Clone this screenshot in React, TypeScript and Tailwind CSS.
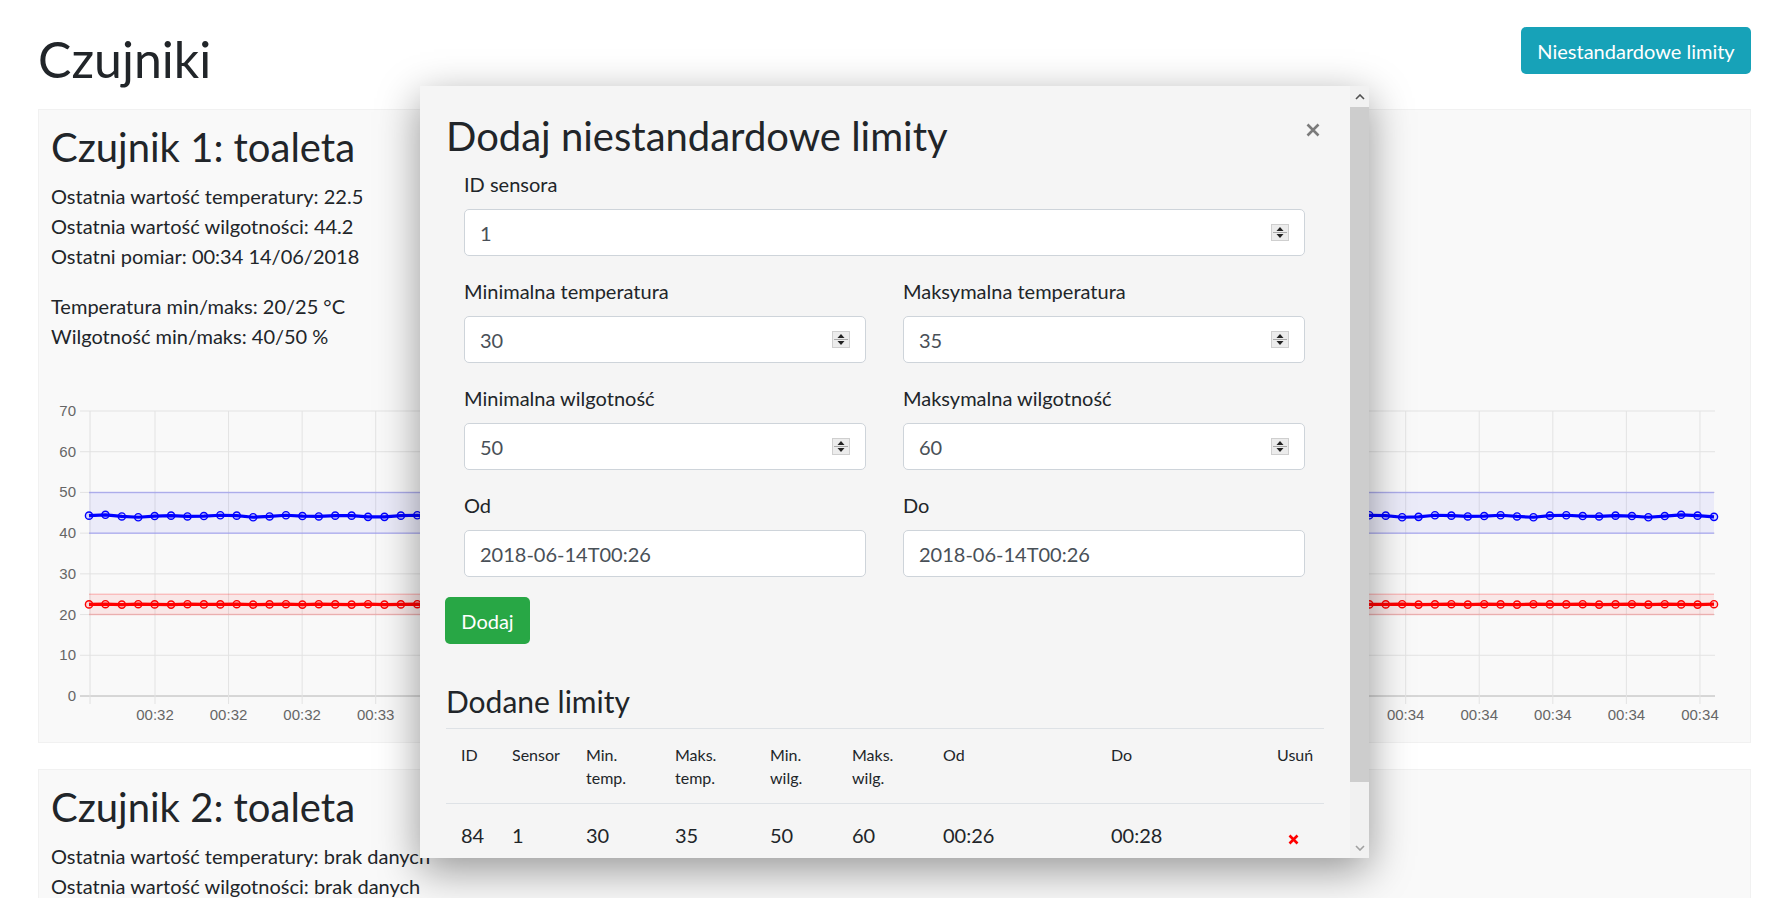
import React from "react";

const yOf = (v: number) => 696 - v * (285 / 70);
const xTicks = Array.from({ length: 22 }, (_, k) => 155 + 73.57 * k);
// etykiety pod modalem (k = 4..16) sa niewidoczne
const xLabels: Record<number, string> = {
  0: "00:32", 1: "00:32", 2: "00:32", 3: "00:33",
  17: "00:34", 18: "00:34", 19: "00:34", 20: "00:34", 21: "00:34",
};
const pts = Array.from({ length: 100 }, (_, i) => 89 + (i * (1714 - 89)) / 99);
const hum = pts.map((_, i) => 44.2 + 0.1 * Math.round(2 * Math.sin(i * 1.7) + Math.cos(i * 0.9)));
const temp = pts.map((_, i) => 22.5 + 0.05 * Math.round(Math.sin(i * 2.3)));

const Spinner = () => (
  <svg width="18" height="17" viewBox="0 0 18 17">
    <rect x="0.5" y="0.5" width="17" height="16" fill="#ececec" stroke="#cfcfcf" />
    <polygon points="9,3 5.5,7 12.5,7" fill="#222" />
    <line x1="2" y1="8.5" x2="16" y2="8.5" stroke="#a8a8a8" />
    <polygon points="5.5,10 12.5,10 9,14" fill="#222" />
  </svg>
);

const Field = ({ label, value, spin = true }: { label: string; value: string; spin?: boolean }) => (
  <div className="mb-[20px]">
    <label className="mb-[10px] block text-[20px] leading-[30px]">{label}</label>
    <div className="flex h-[47px] items-center justify-between rounded-[5px] border border-[#ced4da] bg-white px-[15px] text-[20px] text-[#495057]">
      <span>{value}</span>
      {spin && <Spinner />}
    </div>
  </div>
);

const Chart = () => (
  <svg width="1711" height="364" viewBox="39 368 1711 364" className="block">
    {[0, 10, 20, 30, 40, 50, 60, 70].map((v) => (
      <g key={v}>
        <line x1="80" x2="1715" y1={yOf(v)} y2={yOf(v)} stroke={v === 0 ? "#b4b4b4" : "#e3e3e3"} strokeWidth="1" />
        <text x="76" y={yOf(v) + 5} textAnchor="end" fontSize="15" fill="#666" fontFamily="Liberation Sans, Arial, sans-serif">
          {v}
        </text>
      </g>
    ))}
    <line x1="90" x2="90" y1="411" y2="704" stroke="#e0e0e0" />
    {xTicks.map((x, k) => (
      <g key={k}>
        <line x1={x} x2={x} y1="411" y2="704" stroke="#e3e3e3" />
        {xLabels[k] && (
          <text x={x} y="720" textAnchor="middle" fontSize="15" fill="#666" fontFamily="Liberation Sans, Arial, sans-serif">
            {xLabels[k]}
          </text>
        )}
      </g>
    ))}
    {/* pasmo wilgotności */}
    <rect x="89" y={yOf(50)} width={1714 - 89} height={yOf(40) - yOf(50)} fill="rgba(0,0,255,0.055)" />
    <line x1="89" x2="1714" y1={yOf(50)} y2={yOf(50)} stroke="rgba(0,0,255,0.22)" strokeWidth="1.5" />
    <line x1="89" x2="1714" y1={yOf(40)} y2={yOf(40)} stroke="rgba(0,0,255,0.22)" strokeWidth="1.5" />
    {/* pasmo temperatury */}
    <rect x="89" y={yOf(25)} width={1714 - 89} height={yOf(20) - yOf(25)} fill="rgba(255,0,0,0.07)" />
    <line x1="89" x2="1714" y1={yOf(25)} y2={yOf(25)} stroke="rgba(255,0,0,0.2)" strokeWidth="1.5" />
    <line x1="89" x2="1714" y1={yOf(20)} y2={yOf(20)} stroke="rgba(255,0,0,0.2)" strokeWidth="1.5" />

    <polyline points={pts.map((x, i) => `${x},${yOf(hum[i])}`).join(" ")} fill="none" stroke="#0000ff" strokeWidth="3.2" />
    {pts.map((x, i) => (
      <circle key={"h" + i} cx={x} cy={yOf(hum[i])} r="3.6" fill="rgba(0,0,255,0.12)" stroke="#0000ff" strokeWidth="1.4" />
    ))}
    <polyline points={pts.map((x, i) => `${x},${yOf(temp[i])}`).join(" ")} fill="none" stroke="#ff0000" strokeWidth="3.2" />
    {pts.map((x, i) => (
      <circle key={"t" + i} cx={x} cy={yOf(temp[i])} r="3.6" fill="rgba(255,0,0,0.12)" stroke="#ff0000" strokeWidth="1.4" />
    ))}
  </svg>
);

const cols = "grid grid-cols-[51px_74px_89px_95px_82px_91px_168px_166px_62px]";

export default function App() {
  return (
    <div className="relative h-[898px] overflow-hidden bg-white font-[Lato,sans-serif] text-[#212529]">
      <div className="pl-[38px] pr-[28px]">
        {/* naglowek */}
        <div className="flex items-start justify-between pt-[27px]">
          <h1 className="mt-[2px] text-[50px] leading-[60px]">Czujniki</h1>
          <button className="h-[47px] w-[230px] rounded-[5px] bg-[#17a2b8] text-[20px] text-white">
            Niestandardowe limity
          </button>
        </div>

        {/* czujnik 1 */}
        <div className="mt-[20px] border border-[#f1f1f1] bg-[#f9f9f9] pt-[13px] pb-[10px]">
          <div className="px-[12px]">
            <h2 className="mb-[10px] text-[40px] leading-[48px]">Czujnik 1: toaleta</h2>
            <p className="mb-[20px] text-[20px] leading-[30px]">
              Ostatnia wartość temperatury: 22.5
              <br />
              Ostatnia wartość wilgotności: 44.2
              <br />
              Ostatni pomiar: 00:34 14/06/2018
            </p>
            <p className="mb-[17px] text-[20px] leading-[30px]">
              Temperatura min/maks: 20/25 °C
              <br />
              Wilgotność min/maks: 40/50 %
            </p>
          </div>
          <Chart />
        </div>

        {/* czujnik 2 */}
        <div className="mt-[26px] border border-[#f1f1f1] bg-[#f9f9f9] pt-[13px] pb-[10px]">
          <div className="px-[12px]">
            <h2 className="mb-[10px] text-[40px] leading-[48px]">Czujnik 2: toaleta</h2>
            <p className="mb-[20px] text-[20px] leading-[30px]">
              Ostatnia wartość temperatury: brak danych
              <br />
              Ostatnia wartość wilgotności: brak danych
            </p>
          </div>
        </div>
      </div>

      {/* MODAL */}
      <div className="absolute top-[86px] left-[420px] flex h-[772px] w-[949px] bg-[#f5f5f5] shadow-[0_12px_40px_rgba(0,0,0,0.4)]">
        <div className="flex-1 overflow-hidden px-[26px] pt-[26px]">
          <div className="flex items-start justify-between">
            <h2 className="text-[40px] leading-[48px]">Dodaj niestandardowe limity</h2>
            <svg width="14" height="14" viewBox="0 0 14 14" className="mt-[11px] mr-[4px]">
              <path d="M1.5 1.5 L12.5 12.5 M12.5 1.5 L1.5 12.5" stroke="#7b7b7b" strokeWidth="2.6" />
            </svg>
          </div>

          <div className="mt-[9px] pr-[19px] pl-[18px]">
            <Field label="ID sensora" value="1" />
            <div className="grid grid-cols-2 gap-x-[37px]">
              <Field label="Minimalna temperatura" value="30" />
              <Field label="Maksymalna temperatura" value="35" />
              <Field label="Minimalna wilgotność" value="50" />
              <Field label="Maksymalna wilgotność" value="60" />
              <Field label="Od" value="2018-06-14T00:26" spin={false} />
              <Field label="Do" value="2018-06-14T00:26" spin={false} />
            </div>
          </div>

          <button className="ml-[-1px] h-[47px] w-[85px] rounded-[5px] bg-[#28a745] text-[20px] text-white">
            Dodaj
          </button>

          <h4 className="mt-[39px] mb-[9px] text-[30px] leading-[36px]">Dodane limity</h4>

          <div className="border-t border-[#dee2e6]">
            <div className={`${cols} border-b border-[#dee2e6] pt-[15px] pb-[14px] text-[16px] leading-[22.5px]`}>
              <div className="px-[15px]">ID</div>
              <div className="px-[15px]">Sensor</div>
              <div className="px-[15px]">Min.<br />temp.</div>
              <div className="px-[15px]">Maks.<br />temp.</div>
              <div className="px-[15px]">Min.<br />wilg.</div>
              <div className="px-[15px]">Maks.<br />wilg.</div>
              <div className="px-[15px]">Od</div>
              <div className="px-[15px]">Do</div>
              <div className="px-[15px] text-center">Usuń</div>
            </div>
            <div className={`${cols} pt-[16px] pb-[14px] text-[20px] leading-[30px]`}>
              <div className="px-[15px]">84</div>
              <div className="px-[15px]">1</div>
              <div className="px-[15px]">30</div>
              <div className="px-[15px]">35</div>
              <div className="px-[15px]">50</div>
              <div className="px-[15px]">60</div>
              <div className="px-[15px]">00:26</div>
              <div className="px-[15px]">00:28</div>
              <div className="flex justify-center px-[15px]">
                <svg width="11" height="11" viewBox="0 0 11 11" className="mt-[14px]">
                  <path d="M1.5 1.5 L9.5 9.5 M9.5 1.5 L1.5 9.5" stroke="#ff0000" strokeWidth="2.6" />
                </svg>
              </div>
            </div>
          </div>
        </div>

        {/* pasek przewijania */}
        <div className="flex w-[19px] flex-col bg-[#f1f1f1]">
          <div className="flex h-[21px] items-center justify-center">
            <svg width="10" height="6" viewBox="0 0 10 6">
              <polyline points="1,5 5,1 9,5" fill="none" stroke="#505050" strokeWidth="1.6" />
            </svg>
          </div>
          <div className="h-[675px] bg-[#cdcdcd]" />
          <div className="flex-1" />
          <div className="flex h-[21px] items-center justify-center">
            <svg width="10" height="6" viewBox="0 0 10 6">
              <polyline points="1,1 5,5 9,1" fill="none" stroke="#a0a0a0" strokeWidth="1.6" />
            </svg>
          </div>
        </div>
      </div>
    </div>
  );
}
